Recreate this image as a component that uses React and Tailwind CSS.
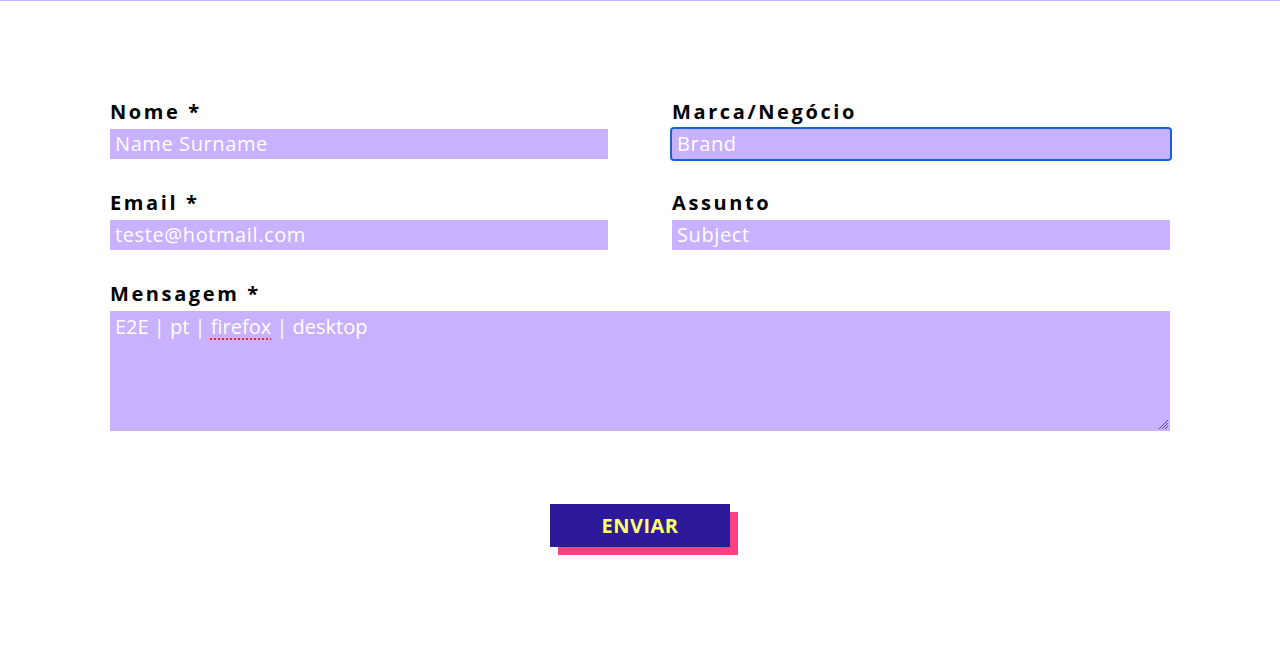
import React from "react";

const font = { fontFamily: '"Open Sans", "DejaVu Sans", sans-serif' };

function Field({ label, placeholder, focused }) {
  return (
    <div className="flex flex-col">
      <label className="text-[20px] leading-[24px] font-bold tracking-[2.6px] text-black mb-[5px]">{label}</label>
      <input
        placeholder={placeholder}
        className={`h-[30px] w-full bg-[#c8b1ff] px-[5px] text-[20px] tracking-[0.6px] text-white placeholder:text-white outline-none ${focused ? "ring-2 ring-[#1266d9] rounded-[2px]" : ""}`}
      />
    </div>
  );
}

export default function App() {
  return (
    <div className="min-h-[647px] bg-white border-t border-[#c8b1ff]" style={font}>
      <div className="mx-[110px] pt-[99px]">
        <div className="grid grid-cols-2 gap-x-[64px] gap-y-[32px]">
          <Field label="Nome *" placeholder="Name Surname" />
          <Field label="Marca/Negócio" placeholder="Brand" focused />
          <Field label="Email *" placeholder="teste@hotmail.com" />
          <Field label="Assunto" placeholder="Subject" />
        </div>

        <div className="flex flex-col mt-[32px]">
          <label className="text-[20px] leading-[24px] font-bold tracking-[2.6px] text-black mb-[5px]">Mensagem *</label>
          <div className="relative h-[120px] bg-[#c8b1ff] px-[5px] pt-[1px] text-[20px] text-white">
            E2E | pt | <span className="underline decoration-dotted decoration-[#ff2020] underline-offset-[4px]">firefox</span> | desktop
            <svg className="absolute right-[1px] bottom-[1px]" width="10" height="10" viewBox="0 0 10 10">
              <path d="M9 3 L3 9 M9 6 L6 9 M9 0 L0 9" stroke="#5a4a8a" strokeWidth="1" />
            </svg>
          </div>
        </div>

        <div className="flex justify-center mt-[73px]">
          <div className="relative w-[180px] h-[43px]">
            <div className="absolute left-[8px] top-[8px] w-[180px] h-[43px] bg-[#ff4181]" />
            <button className="relative w-[180px] h-[43px] bg-[#2d1a9a] text-[#ffff70] text-[20px] font-bold tracking-[0.5px]">
              ENVIAR
            </button>
          </div>
        </div>
      </div>
    </div>
  );
}
